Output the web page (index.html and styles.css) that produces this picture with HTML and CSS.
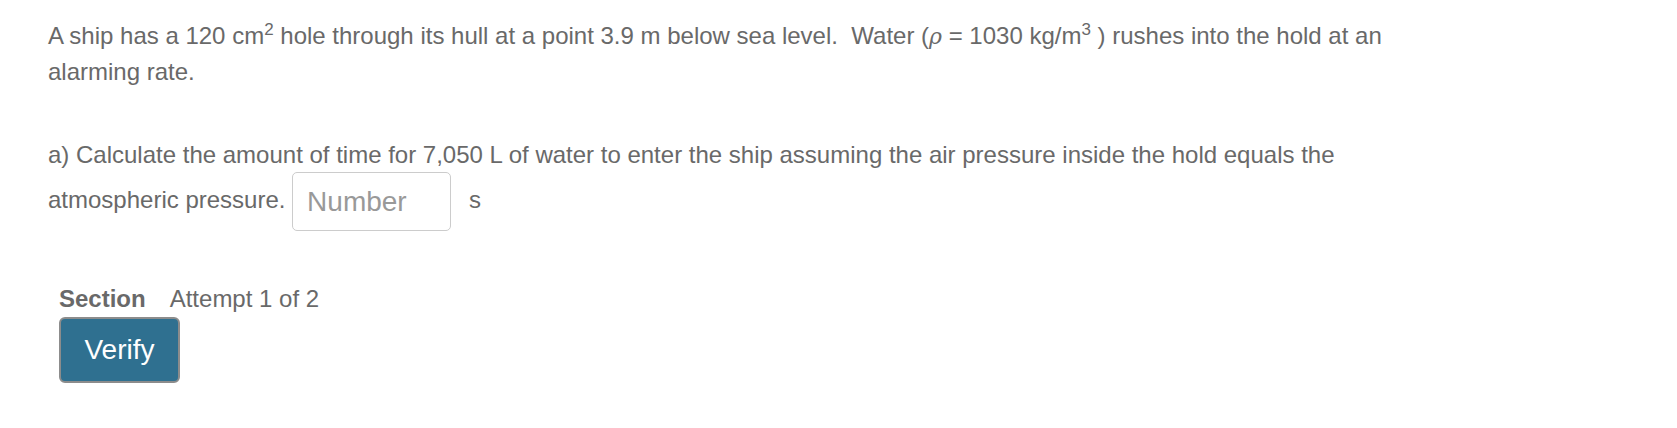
FILE: index.html
```html
<!DOCTYPE html>
<html>
<head>
<meta charset="utf-8">
<link rel="stylesheet" href="styles.css">
</head>
<body>
<div class="page">
  <p class="intro">A ship has a 120 cm<sup class="sup">2</sup> hole through its hull at a point 3.9 m below sea level. &nbsp;Water (<span class="rho">ρ</span> = 1030 kg/m<sup class="sup">3</sup> ) rushes into the hold at an alarming rate.</p>
  <p class="part">a) Calculate the amount of time for 7,050 L of water to enter the ship assuming the air pressure inside the hold equals the atmospheric pressure. <input class="num" type="text" placeholder="Number"><span class="unit">s</span></p>
  <div class="section">
    <div class="meta"><span class="label">Section</span><span class="attempt">Attempt 1 of 2</span></div>
    <button class="verify">Verify</button>
  </div>
</div>
</body>
</html>
```

FILE: styles.css
```css
html, body {
  margin: 0;
  padding: 0;
  background: #ffffff;
}
.page {
  padding: 18px 0 0 48px;
  width: 1340px;
  font-family: "Liberation Sans", Arial, Helvetica, sans-serif;
  color: #696969;
}
.intro {
  margin: 0;
  font-size: 24px;
  line-height: 35px;
}
.sup {
  font-size: 17px;
  line-height: 0;
  vertical-align: 9px;
}
.rho {
  font-style: italic;
  font-family: "DejaVu Serif", "Liberation Serif", serif;
  font-size: 22px;
}
.part {
  margin: 48px 0 0 0;
  font-size: 24px;
  line-height: 35px;
}
.num {
  box-sizing: border-box;
  width: 159px;
  height: 59px;
  margin: 0;
  padding: 0 14px;
  border: 1.5px solid #cccccc;
  border-radius: 5px;
  font-family: "Liberation Sans", Arial, sans-serif;
  font-size: 28px;
  color: #666666;
  vertical-align: middle;
  outline: none;
}
.num::placeholder {
  color: #999999;
}
.unit {
  margin-left: 18px;
}
.section {
  margin: 54px 0 0 11px;
  display: flex;
  flex-direction: column;
  align-items: flex-start;
  gap: 4px;
}
.meta {
  display: flex;
  gap: 24px;
  font-size: 24px;
  line-height: 28px;
}
.label {
  font-weight: bold;
}
.verify {
  box-sizing: border-box;
  width: 121px;
  height: 66px;
  background: #2f7090;
  border: 2px solid #8c8c8c;
  border-radius: 6px;
  color: #ffffff;
  font-family: "Liberation Sans", Arial, sans-serif;
  font-size: 28px;
  padding: 0;
}
```
